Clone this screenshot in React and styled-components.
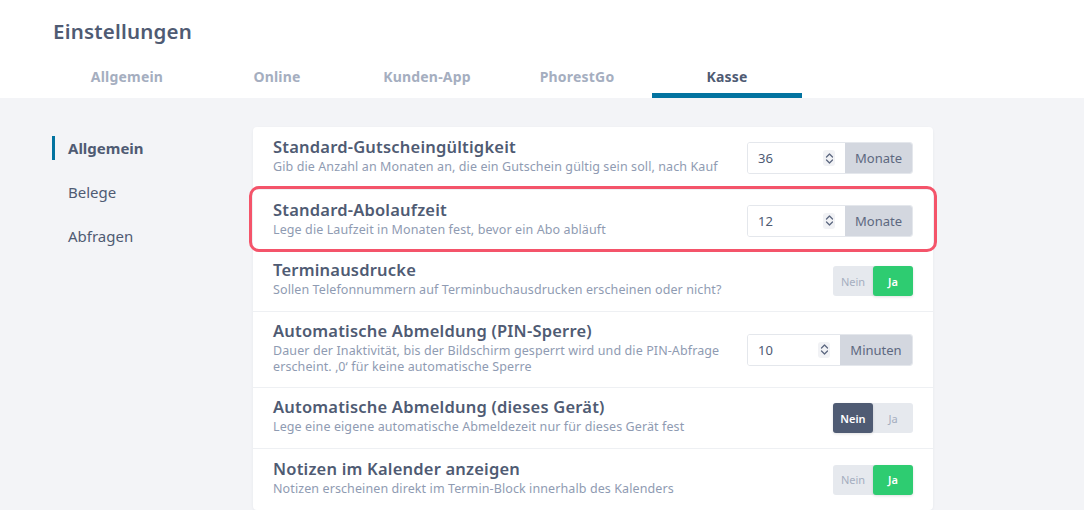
import React, { useState } from "react";
import styled, { createGlobalStyle } from "styled-components";

const GlobalStyle = createGlobalStyle`
  html, body { margin: 0; padding: 0; }
  body {
    background: #f3f4f7;
    font-family: "Noto Sans", "DejaVu Sans", sans-serif;
    color: #4f5b73;
  }
`;

// header with title and the top tabs
const Header = styled.header`
  background: #fff;
  padding: 18px 0 0 53px;
  height: 98px;
  box-sizing: border-box;
  display: flex;
  flex-direction: column;
`;
const Title = styled.h1`
  margin: 0;
  font-size: 20.5px;
  font-weight: 600;
  letter-spacing: 0.2px;
  color: #4f5b73;
  line-height: 26px;
`;
const Tabs = styled.nav`
  display: flex;
  margin-top: auto;
  margin-left: -1px;
`;
const Tab = styled.div`
  width: 150px;
  height: 33px;
  box-sizing: border-box;
  text-align: center;
  font-size: 14px;
  font-weight: 700;
  letter-spacing: 0.2px;
  padding-top: 2px;
  color: ${(p) => (p.$active ? "#4f5b73" : "#a5aec0")};
  border-bottom: 5px solid ${(p) => (p.$active ? "#0273a0" : "transparent")};
  cursor: pointer;
`;

const Body = styled.div`
  display: flex;
  padding: 29px 0 0 52px;
`;
const Side = styled.aside`
  width: 201px;
  display: flex;
  flex-direction: column;
  gap: 20px;
  padding-top: 9px;
`;
const SideItem = styled.div`
  font-size: 15px;
  line-height: 24px;
  padding-left: 13px;
  border-left: 3px solid ${(p) => (p.$active ? "#0273a0" : "transparent")};
  font-weight: ${(p) => (p.$active ? 700 : 400)};
  color: #4f5b73;
`;

const Card = styled.section`
  width: 680px;
  background: #fff;
  border-radius: 4px;
  box-shadow: 0 1px 3px rgba(40, 50, 80, 0.06);
`;
const Row = styled.div`
  position: relative;
  display: flex;
  align-items: center;
  padding: 10px 20px;
  height: ${(p) => p.$h || 61}px;
  box-sizing: border-box;
  border-top: ${(p) => (p.$first || p.$afterHl ? "none" : "1px solid #eef0f3")};
  &::after {
    content: "";
    display: ${(p) => (p.$highlight ? "block" : "none")};
    position: absolute;
    inset: -4px -4px -1px -4px;
    border: 3px solid #f4546a;
    border-radius: 10px;
    pointer-events: none;
  }
`;
const Text = styled.div`
  flex: 1;
  min-width: 0;
  padding-bottom: 5px;
`;
const RowTitle = styled.div`
  font-size: 16.5px;
  font-weight: 600;
  letter-spacing: 0.2px;
  color: #4f5b73;
  line-height: 22px;
`;
const RowDesc = styled.div`
  font-size: 12.5px;
  letter-spacing: 0.1px;
  color: #8f9bb2;
  line-height: 16px;
  margin-top: 1px;
  max-width: 470px;
`;

const Group = styled.div`
  display: flex;
  height: 30px;
  border: 1px solid #e4e7ec;
  border-radius: 3px;
  overflow: hidden;
`;
const NumBox = styled.div`
  width: ${(p) => p.$w}px;
  display: flex;
  align-items: center;
  justify-content: space-between;
  padding: 0 10px;
  box-sizing: border-box;
  font-size: 13px;
  color: #4f5b73;
  background: #fff;
`;
const Spin = styled.span`
  display: flex;
  align-items: center;
  justify-content: center;
  width: 12px;
  height: 16px;
  border-radius: 3px;
  background: #f1f2f5;
`;
const Unit = styled.div`
  background: #d3d7df;
  color: #5d6880;
  font-size: 13px;
  display: flex;
  align-items: center;
  justify-content: center;
  width: ${(p) => p.$w}px;
`;

const Toggle = styled.div`
  display: flex;
  height: 30px;
  border-radius: 3px;
  background: #e6e9ee;
`;
const ToggleBtn = styled.button`
  width: 40px;
  border: none;
  border-radius: 3px;
  font-family: inherit;
  font-size: 11px;
  font-weight: ${(p) => (p.$on ? 600 : 400)};
  cursor: pointer;
  background: ${(p) => (p.$on ? p.$color : "transparent")};
  color: ${(p) => (p.$on ? "#fff" : "#a5aec0")};
  box-shadow: ${(p) => (p.$on ? "0 1px 3px rgba(0,0,0,0.12)" : "none")};
`;

const SpinIcon = () => (
  <svg width="9" height="13" viewBox="0 0 9 13" fill="none" stroke="#5d6880" strokeWidth="1.3" strokeLinecap="round" strokeLinejoin="round">
    <path d="M1.5 5 L4.5 2 L7.5 5" />
    <path d="M1.5 8 L4.5 11 L7.5 8" />
  </svg>
);

const NumberField = ({ value, unit, numW = 97, unitW = 67 }) => (
  <Group>
    <NumBox $w={numW}>
      <span>{value}</span>
      <Spin>
        <SpinIcon />
      </Spin>
    </NumBox>
    <Unit $w={unitW}>{unit}</Unit>
  </Group>
);

const YesNo = ({ initial }) => {
  const [val, setVal] = useState(initial);
  return (
    <Toggle>
      <ToggleBtn $on={!val} $color="#4f5b73" onClick={() => setVal(false)}>Nein</ToggleBtn>
      <ToggleBtn $on={val} $color="#2ecc71" onClick={() => setVal(true)}>Ja</ToggleBtn>
    </Toggle>
  );
};

const tabs = ["Allgemein", "Online", "Kunden-App", "PhorestGo", "Kasse"];

export default function App() {
  return (
    <>
      <GlobalStyle />
      <Header>
        <Title>Einstellungen</Title>
        <Tabs>
          {tabs.map((t) => (
            <Tab key={t} $active={t === "Kasse"}>{t}</Tab>
          ))}
        </Tabs>
      </Header>
      <Body>
        <Side>
          <SideItem $active>Allgemein</SideItem>
          <SideItem>Belege</SideItem>
          <SideItem>Abfragen</SideItem>
        </Side>
        <Card>
          <Row $first $h={62}>
            <Text>
              <RowTitle>Standard-Gutscheingültigkeit</RowTitle>
              <RowDesc>Gib die Anzahl an Monaten an, die ein Gutschein gültig sein soll, nach Kauf</RowDesc>
            </Text>
            <NumberField value="36" unit="Monate" />
          </Row>
          <Row $highlight $h={62}>
            <Text>
              <RowTitle>Standard-Abolaufzeit</RowTitle>
              <RowDesc>Lege die Laufzeit in Monaten fest, bevor ein Abo abläuft</RowDesc>
            </Text>
            <NumberField value="12" unit="Monate" />
          </Row>
          <Row $afterHl $h={60}>
            <Text>
              <RowTitle>Terminausdrucke</RowTitle>
              <RowDesc>Sollen Telefonnummern auf Terminbuchausdrucken erscheinen oder nicht?</RowDesc>
            </Text>
            <YesNo initial={true} />
          </Row>
          <Row $h={76}>
            <Text>
              <RowTitle>Automatische Abmeldung (PIN-Sperre)</RowTitle>
              <RowDesc>Dauer der Inaktivität, bis der Bildschirm gesperrt wird und die PIN-Abfrage erscheint. ‚0‘ für keine automatische Sperre</RowDesc>
            </Text>
            <NumberField value="10" unit="Minuten" numW={92} unitW={72} />
          </Row>
          <Row $h={61}>
            <Text>
              <RowTitle>Automatische Abmeldung (dieses Gerät)</RowTitle>
              <RowDesc>Lege eine eigene automatische Abmeldezeit nur für dieses Gerät fest</RowDesc>
            </Text>
            <YesNo initial={false} />
          </Row>
          <Row $h={62}>
            <Text>
              <RowTitle>Notizen im Kalender anzeigen</RowTitle>
              <RowDesc>Notizen erscheinen direkt im Termin-Block innerhalb des Kalenders</RowDesc>
            </Text>
            <YesNo initial={true} />
          </Row>
        </Card>
      </Body>
    </>
  );
}
